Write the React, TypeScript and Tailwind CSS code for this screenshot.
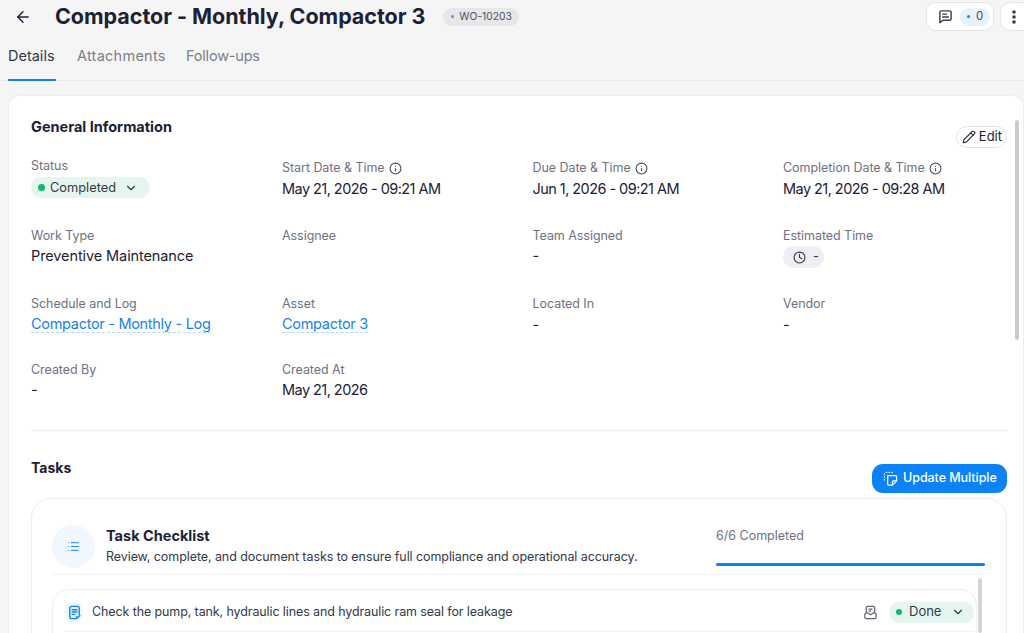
import { ArrowLeft, ChevronDown, Clock, Info, List, Pencil } from "lucide-react";

const ink = "text-[#1c2136]";

function Label({ children, info }: { children: string; info?: boolean }) {
  return (
    <div className="flex items-center gap-[4px] h-[20px] text-[12.5px] leading-[20px] tracking-[-0.05px] text-[#6f7180]">
      {children}
      {info && <Info size={13} strokeWidth={2} className="text-[#4a4d5c]" />}
    </div>
  );
}

function Value({ children, date, tight }: { children: string; date?: boolean; tight?: boolean }) {
  return (
    <div className={`${tight ? "-mt-[1px]" : "mt-0"} h-[22px] text-[14.5px] leading-[22px] ${date ? "tracking-[-0.55px]" : "tracking-[-0.1px]"} ${ink}`}>
      {children}
    </div>
  );
}

function LinkValue({ children }: { children: string }) {
  return (
    <div className="h-[22px] text-[14.5px] leading-[20px] tracking-[-0.3px]">
      <span className="text-[#1683e8] border-b border-dashed border-[#b5d8f8]">{children}</span>
    </div>
  );
}

function Field({ label, value, tight }: { label: string; value: string; tight?: boolean }) {
  return (
    <div>
      <Label>{label}</Label>
      <Value tight={tight}>{value}</Value>
    </div>
  );
}

export default function App() {
  return (
    <div className="relative w-[1024px] h-[633px] overflow-hidden bg-[#f5f5f6] font-['Inter',sans-serif]">
      {/* Header */}
      <div className="flex items-center h-[33px] pl-[14px] w-[1040px]">
        <ArrowLeft size={18} strokeWidth={1.8} className={ink} />
        <h1 className={`ml-[23px] text-[21.5px] leading-[33px] font-bold tracking-[-0.03px] ${ink}`}>Compactor - Monthly, Compactor 3</h1>
        <div className="ml-[18px] flex items-center gap-[5px] h-[18px] pl-[8px] pr-[7px] rounded-full bg-[#e6e7eb] text-[10.3px] text-[#50535f]">
          <span className="w-[3px] h-[3px] rounded-full bg-[#8a8d99]" />
          WO-10203
        </div>
        <div className="ml-auto flex items-center gap-[6px]">
          <div className="flex items-center gap-[7px] w-[68px] h-[29px] pl-[11px] rounded-[10px] border border-[#e6e6ea] bg-white">
            <svg width="15" height="15" viewBox="0 0 16 16" fill="none" stroke="#3a3d4c" strokeWidth="1.5" strokeLinecap="round" strokeLinejoin="round">
              <path d="M3.5 2h9A1.5 1.5 0 0 1 14 3.5v7a1.5 1.5 0 0 1-1.5 1.5H5.5L2 14.5v-11A1.5 1.5 0 0 1 3.5 2z" />
              <path d="M5 5.5h4M5 8.5h6" />
            </svg>
            <div className="flex items-center gap-[6px] h-[18px] px-[7px] rounded-full bg-[#e7f2fd] text-[11.5px] text-[#4a4d5c]">
              <span className="w-[3px] h-[3px] rounded-full bg-[#1683e8]" />
              0
            </div>
          </div>
          <div className="flex items-center w-[40px] h-[29px] pl-[9px] rounded-[10px] border border-[#e6e6ea] bg-white">
            <svg width="8" height="14" viewBox="0 0 8 14" fill="#3a3d4c">
              <circle cx="4" cy="2" r="1.8" />
              <circle cx="4" cy="7" r="1.8" />
              <circle cx="4" cy="12" r="1.8" />
            </svg>
          </div>
        </div>
      </div>

      {/* Tabs */}
      <div className="mt-[5px] h-[43px] flex gap-[21px] pl-[8px] border-b border-[#ebebee] text-[14.5px] leading-[36px] text-[#7c7e8b]">
        <div className="w-[48px] h-[43px] border-b-2 border-[#1683e8] text-[#33384a]">Details</div>
        <div className="w-[88px] tracking-[0.25px]">Attachments</div>
        <div className="tracking-[-0.2px]">Follow-ups</div>
      </div>

      {/* Card */}
      <div className="ml-[8px] mt-[14px] h-[560px] rounded-t-[12px] border border-[#eeeef0] bg-white pl-[22px] pr-[16px]">
        <div className="flex justify-between h-[70px]">
          <h2 className={`mt-[21px] text-[14.5px] leading-[20px] font-bold ${ink}`}>General Information</h2>
          <button className={`mt-[30px] flex items-center gap-[3px] h-[22px] pl-[5px] pr-[4px] rounded-full border border-[#e3e3e7] text-[13px] ${ink}`}>
            <Pencil size={14} strokeWidth={1.8} />
            Edit
          </button>
        </div>

        <div className="grid grid-cols-[251px_250.5px_250.5px_1fr]">
          <div className="h-[70px] -mt-[10px]">
            <Label>Status</Label>
            <div className="mt-[1px] flex items-center gap-[5px] w-[119px] h-[21px] pl-[7px] rounded-full bg-[#e4f6ef] text-[12.8px] text-[#33384a]">
              <span className="w-[7px] h-[7px] rounded-full bg-[#14b871]" />
              Completed
              <ChevronDown size={14} strokeWidth={2} className="ml-[3px]" />
            </div>
          </div>
          <div className="-mt-[8px]">
            <Label info>{"Start Date & Time"}</Label>
            <Value date>May 21, 2026 - 09:21 AM</Value>
          </div>
          <div className="-mt-[8px]">
            <Label info>{"Due Date & Time"}</Label>
            <Value date>Jun 1, 2026 - 09:21 AM</Value>
          </div>
          <div className="-mt-[8px]">
            <Label info>{"Completion Date & Time"}</Label>
            <Value date>May 21, 2026 - 09:28 AM</Value>
          </div>
        </div>

        <div className="grid grid-cols-[251px_250.5px_250.5px_1fr] grid-rows-[68px_66px_70px]">
          <Field label="Work Type" value="Preventive Maintenance" tight />
          <Label>Assignee</Label>
          <Field label="Team Assigned" value="-" tight />
          <div>
            <Label>Estimated Time</Label>
            <div className="flex items-center gap-[7px] w-[41px] h-[22px] pl-[10px] rounded-full bg-[#eeeff2] text-[13px] text-[#33384a]">
              <Clock size={13} strokeWidth={2} />-
            </div>
          </div>
          <div>
            <Label>Schedule and Log</Label>
            <LinkValue>Compactor - Monthly - Log</LinkValue>
          </div>
          <div>
            <Label>Asset</Label>
            <LinkValue>Compactor 3</LinkValue>
          </div>
          <Field label="Located In" value="-" />
          <Field label="Vendor" value="-" />
          <Field label="Created By" value="-" tight />
          <div>
            <Label>Created At</Label>
            <Value date tight>May 21, 2026</Value>
          </div>
        </div>

        <div className="border-t border-[#ececef]" />

        {/* Tasks */}
        <div className="flex justify-between h-[67px]">
          <h2 className={`mt-[27px] text-[14px] leading-[20px] font-bold ${ink}`}>Tasks</h2>
          <button className="mt-[33px] flex items-center gap-[5px] h-[29px] w-[135px] pl-[11px] rounded-[11px] bg-[#0b82f6] text-[12.5px] font-medium tracking-[-0.05px] text-white">
            <svg width="15" height="15" viewBox="0 0 16 16" fill="none" stroke="currentColor" strokeWidth="1.3" strokeLinecap="round" strokeLinejoin="round">
              <path d="M1.5 3v.5M1.5 6v.5M1.5 9v.5M3.5 1.5H4M6.5 1.5H7M9.5 1.5h.5" />
              <path d="M5 5h8.5a1 1 0 0 1 1 1v4.5L10 15H6a1 1 0 0 1-1-1z" />
              <path d="M10 15v-3.5a1 1 0 0 1 1-1h3.5" />
            </svg>
            Update Multiple
          </button>
        </div>

        <div className="rounded-t-[20px] border border-[#eeeef0] px-[20px] h-[140px]">
          <div className="flex h-[76px] border-b border-[#f0f0f2]">
            <div className="mt-[26px] flex items-center justify-center w-[43px] h-[43px] rounded-full bg-[#f0f7fe]">
              <List size={13} strokeWidth={1.8} className="text-[#1683e8]" />
            </div>
            <div className="ml-[11px] mt-[25px]">
              <div className={`text-[14.5px] leading-[23px] font-bold ${ink}`}>Task Checklist</div>
              <div className="mt-[1px] text-[12.5px] leading-[18px] tracking-[-0.08px] text-[#33384a]">Review, complete, and document tasks to ensure full compliance and operational accuracy.</div>
            </div>
            <div className="ml-auto mr-[1px] w-[269px] pt-[27px]">
              <div className="text-[12.5px] leading-[20px] text-[#6f7180]">6/6 Completed</div>
              <div className="mt-[17px] h-[3px] rounded-full bg-[#0b82f6]" />
            </div>
          </div>

          <div className="relative mt-[14px] w-[925px] h-[60px] rounded-t-[16px] border border-[#eeeef0] pl-[11px] pr-[2px]">
            <div className="flex items-center h-[42px] pt-[3px] border-b border-[#f0f0f2]">
              <div className="flex items-center justify-center w-[20px] h-[20px] rounded-full bg-[#eef6fe]">
                <svg width="15" height="15" viewBox="0 0 16 16" fill="none" stroke="#1683e8" strokeWidth="1.5" strokeLinecap="round" strokeLinejoin="round">
                  <path d="M10.5 14.5H5a2 2 0 0 1-2-2V3.5A2 2 0 0 1 5 1.5h6a2 2 0 0 1 2 2V10" />
                  <path d="M5.5 5h5M5.5 7.5h5M5.5 10h3M10 12.5l1.2 1.2 2.5-2.5" />
                </svg>
              </div>
              <span className="ml-[8px] text-[12.5px] tracking-[-0.11px] text-[#33384a]">Check the pump, tank, hydraulic lines and hydraulic ram seal for leakage</span>
              <svg width="15" height="15" viewBox="0 0 16 16" fill="none" stroke="#5e6070" strokeWidth="1.3" strokeLinejoin="round" className="ml-auto">
                <path d="M3.5 8V3a1.5 1.5 0 0 1 1.5-1.5h6A1.5 1.5 0 0 1 12.5 3v5" />
                <path d="M6 4.5h4M6 6.5h2.5" />
                <path d="M2 9.5 4 8l4 2.5L12 8l2 1.5v3.5a1.5 1.5 0 0 1-1.5 1.5h-9A1.5 1.5 0 0 1 2 13z" />
              </svg>
              <div className="ml-[11px] flex items-center gap-[7px] w-[85px] h-[21px] pl-[7px] rounded-full bg-[#e4f6ef] text-[13px] text-[#33384a]">
                <span className="w-[6px] h-[6px] rounded-full bg-[#14b871]" />
                Done
                <ChevronDown size={14} strokeWidth={2} className="ml-[3px]" />
              </div>
            </div>
          </div>
        </div>
      </div>

      {/* Scrollbars */}
      <div className="absolute left-[1015px] top-[120px] w-[4px] h-[220px] rounded-full bg-[#c9c9cf]" />
      <div className="absolute left-[978px] top-[578px] w-[4px] h-[55px] rounded-full bg-[#d4d4d8]" />
    </div>
  );
}
